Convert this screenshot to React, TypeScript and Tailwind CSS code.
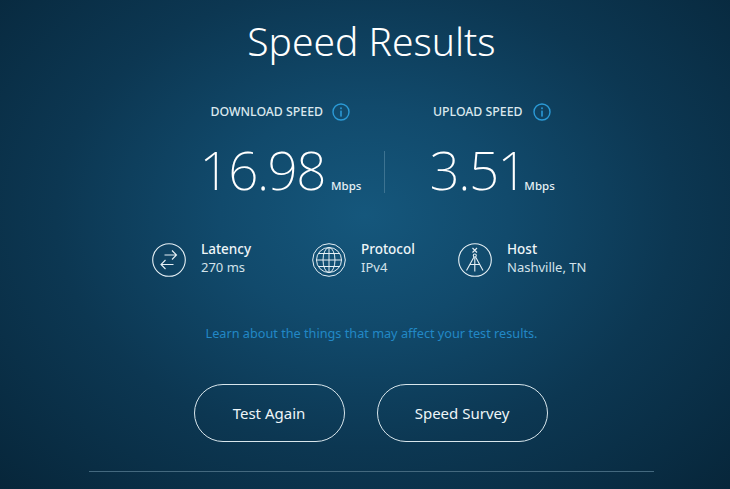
const sans = "font-['Noto_Sans',sans-serif]";

function InfoIcon() {
  return (
    <svg width="18" height="18" viewBox="0 0 18 18" fill="none" className="shrink-0">
      <circle cx="9" cy="9" r="8" stroke="#2b9ad6" strokeWidth="1.4" />
      <rect x="8.2" y="4.4" width="1.6" height="1.8" fill="#2b9ad6" />
      <rect x="8.2" y="7.6" width="1.6" height="6" fill="#2b9ad6" />
    </svg>
  );
}

function LatencyIcon() {
  return (
    <svg width="34" height="34" viewBox="0 0 34 34" fill="none" stroke="#e6f0f5" strokeWidth="1.1" className="shrink-0">
      <circle cx="17" cy="17" r="16.3" />
      <path d="M12.5 12H24.5M20 7.5L24.5 12L20 16.5" />
      <path d="M21.5 21.5H9M13.5 17L9 21.5L13.5 26" />
    </svg>
  );
}

function ProtocolIcon() {
  return (
    <svg width="34" height="34" viewBox="0 0 34 34" fill="none" stroke="#e6f0f5" strokeWidth="1" className="shrink-0">
      <circle cx="17" cy="17" r="16.3" />
      <circle cx="17" cy="17" r="12.5" />
      <ellipse cx="17" cy="17" rx="6" ry="12.5" />
      <path d="M17 4.5V29.5M4.5 17H29.5M6.3 10.5H27.7M6.3 23.5H27.7" />
    </svg>
  );
}

function HostIcon() {
  return (
    <svg width="34" height="34" viewBox="0 0 34 34" fill="none" stroke="#e6f0f5" strokeWidth="1.1" className="shrink-0">
      <circle cx="17" cy="17" r="16.3" />
      <path d="M14.5 5L19 9.5M19 5L14.5 9.5" />
      <circle cx="16.8" cy="12.5" r="1.5" />
      <path d="M16 14L8.5 27.5M17.6 14L25 27.5M16.8 14.5V28.5M11.5 21.5H22" />
    </svg>
  );
}

function Stat({
  icon,
  label,
  value,
  width,
}: {
  icon: React.ReactNode;
  label: string;
  value: string;
  width: string;
}) {
  return (
    <div className={`flex items-center gap-[15px] ${width}`}>
      {icon}
      <div className="flex flex-col pb-[4px]">
        <span className="text-[13.5px] leading-[18px] font-medium text-[#eef5f8]">{label}</span>
        <span className="text-[13px] leading-[18px] text-[#d3e2ea]">{value}</span>
      </div>
    </div>
  );
}

function Speed({ value, width, gap }: { value: string; width: string; gap: string }) {
  return (
    <div className={`flex items-baseline pb-[4px] ${width}`}>
      <span className="text-[53px] leading-[60px] font-extralight tracking-[-1.5px] text-white">{value}</span>
      <span className={`${gap} text-[11.5px] font-medium text-[#e6f0f5]`}>Mbps</span>
    </div>
  );
}

export default function App() {
  return (
    <div
      className={`h-[489px] w-[730px] overflow-hidden bg-[radial-gradient(ellipse_at_50%_44%,#15577c_0%,#114a6c_28%,#0c3752_60%,#07263a_100%)] ${sans}`}
    >
      <div className="ml-[89px] flex w-[565px] flex-col items-center">
        <h1 className="mt-[16px] text-[39px] leading-[50px] font-light text-white">Speed Results</h1>

        <div className="mt-[37px] ml-[18px] flex items-center">
          <div className="flex items-center gap-[9px]">
            <span className="text-[12.3px] font-medium text-[#dbe8ee]">DOWNLOAD SPEED</span>
            <InfoIcon />
          </div>
          <div className="ml-[83px] flex items-center gap-[10px]">
            <span className="text-[12.3px] font-medium text-[#dbe8ee]">UPLOAD SPEED</span>
            <InfoIcon />
          </div>
        </div>

        <div className="mt-[19px] ml-[10px] flex items-center">
          <Speed value="16.98" width="w-[184px]" gap="ml-[6px]" />
          <div className="h-[42px] w-px bg-[#3d7391]" />
          <div className="ml-[45px]">
            <Speed value="3.51" width="w-[124px]" gap="-ml-[2px]" />
          </div>
        </div>

        <div className="mt-[36px] ml-[-129px] flex items-center self-start pl-[192px]">
          <Stat icon={<LatencyIcon />} label="Latency" value="270 ms" width="w-[160px]" />
          <Stat icon={<ProtocolIcon />} label="Protocol" value="IPv4" width="w-[146px]" />
          <Stat icon={<HostIcon />} label="Host" value="Nashville, TN" width="w-[132px]" />
        </div>

        <p className="mt-[44px] text-[12.7px] leading-[18px] text-[#2288c6]">
          Learn about the things that may affect your test results.
        </p>

        <div className="mt-[42px] -ml-[2px] flex items-center gap-[32px]">
          <button className="h-[58px] w-[151px] rounded-full border border-[#d8e6ec] text-[15px] text-[#eef5f8]">
            Test Again
          </button>
          <button className="h-[58px] w-[171px] rounded-full border border-[#d8e6ec] text-[15px] text-[#eef5f8]">
            Speed Survey
          </button>
        </div>

        <div className="mt-[29px] h-px w-full bg-[#44697f]" />
      </div>
    </div>
  );
}
